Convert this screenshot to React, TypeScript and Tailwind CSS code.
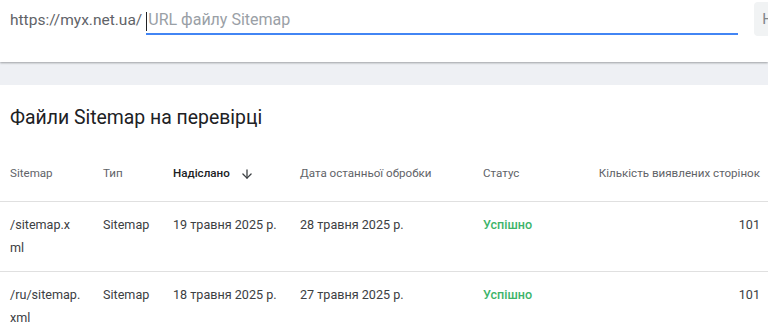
import { ArrowDown } from "lucide-react";

const rows = [
  { path: ["/sitemap.x", "ml"], type: "Sitemap", sent: "19 травня 2025 р.", last: "28 травня 2025 р.", status: "Успішно", count: "101" },
  { path: ["/ru/sitemap.", "xml"], type: "Sitemap", sent: "18 травня 2025 р.", last: "27 травня 2025 р.", status: "Успішно", count: "101" },
];

const cols = "grid grid-cols-[93px_70px_127px_183px_1fr_170px]";

export default function App() {
  return (
    <div className="h-[336px] w-[768px] overflow-hidden bg-[#eef0f4] font-['Roboto',sans-serif]">
      <div className="relative z-10 flex h-[62px] items-start bg-white pl-[10px] shadow-[0_1px_2px_rgba(60,64,67,0.45)]">
        <div className="flex h-[35px] items-end">
          <span className="pb-[3px] text-[15.5px] text-[#5f6368]">https://myx.net.ua/</span>
          <div className="ml-[4px] flex h-[35px] w-[592px] items-end border-b-2 border-[#4285f4] pb-[1px]">
            <span className="mb-[1px] h-[19px] w-px bg-[#202124]" />
            <span className="ml-px text-[16px] text-[#9aa0a6]">URL файлу Sitemap</span>
          </div>
        </div>
        <div className="ml-[16px] mt-[2px] flex h-[34px] w-[40px] items-center rounded-[4px] bg-[#f1f3f4] pl-[8px] text-[15px] text-[#80868b]">
          Н
        </div>
      </div>
      <div className="h-[23px]" />
      <div className="h-full bg-white">
        <h2 className="pl-[10px] pt-[19px] text-[19.4px] leading-[28px] text-[#202124]">
          Файли Sitemap на перевірці
        </h2>
        <div className={`${cols} mt-[15px] h-[55px] items-center border-b border-[#e0e0e0] pl-[10px] pr-[8px] text-[11.6px] text-[#5f6368]`}>
          <div>Sitemap</div>
          <div>Тип</div>
          <div className="flex items-center gap-[10px] font-medium text-[#202124]">
            Надіслано
            <ArrowDown size={14} strokeWidth={2.2} className="text-[#3c4043]" />
          </div>
          <div>Дата останньої обробки</div>
          <div>Статус</div>
          <div className="text-right">Кількість виявлених сторінок</div>
        </div>
        {rows.map((r) => (
          <div
            key={r.path[0]}
            className={`${cols} h-[70px] items-start border-b border-[#e0e0e0] pl-[10px] pr-[8px] pt-[11px] text-[12.6px] leading-[23px] text-[#3c4043]`}
          >
            <div>
              {r.path[0]}
              <br />
              {r.path[1]}
            </div>
            <div>{r.type}</div>
            <div>{r.sent}</div>
            <div>{r.last}</div>
            <div className="font-medium text-[#3cb46a]">{r.status}</div>
            <div className="text-right">{r.count}</div>
          </div>
        ))}
      </div>
    </div>
  );
}
